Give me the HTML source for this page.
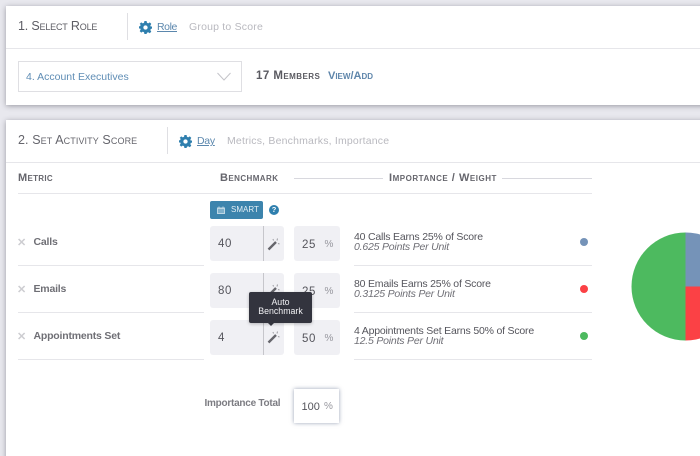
<!DOCTYPE html>
<html><head><meta charset="utf-8">
<style>
html,body{margin:0;padding:0}
body{width:700px;height:456px;overflow:hidden;background:#e8e8ee;position:relative;font-family:"Liberation Sans",sans-serif;color:#5f5f66}
#w{position:absolute;left:0;top:0;width:700px;height:456px;overflow:hidden;filter:blur(.35px)}
.a{position:absolute;white-space:nowrap}
.card{position:absolute;background:#fff;box-shadow:0 1px 5px rgba(60,60,70,.45)}
.line{position:absolute;background:#e6e6ea;height:1px}
.v{position:absolute;background:#dfdfe3;width:1px}
.sc{font-variant:small-caps}
.box{position:absolute;background:#f0f0f4;border-radius:3px}
.num{position:absolute;font-size:11.5px;color:#55555c;letter-spacing:.6px;line-height:14px}
.pct{position:absolute;font-size:10px;color:#96969d;line-height:14px}
.x{position:absolute;font-size:11px;font-weight:bold;color:#cdcdd1;line-height:14px}
.m{position:absolute;font-size:10.5px;font-weight:bold;color:#606067;letter-spacing:-.2px;line-height:14px;white-space:nowrap;opacity:.9}
.e1{position:absolute;font-size:10.5px;color:#55555c;letter-spacing:-.2px;line-height:11px;white-space:nowrap}
.e2{position:absolute;font-size:10.5px;font-style:italic;color:#6f6f76;letter-spacing:-.2px;line-height:11px;white-space:nowrap}
.dot{position:absolute;width:8px;height:8px;border-radius:50%}
</style></head><body><div id="w">

<div class="card" style="left:6px;top:6px;width:700px;height:99px"></div>
<div class="card" style="left:6px;top:120px;width:700px;height:345px"></div>

<!-- Card 1 -->
<div class="a sc" style="left:18px;top:18px;font-size:12.5px;line-height:16px;letter-spacing:-.18px;color:#5d5d64">1. Select Role</div>
<div class="v" style="left:127px;top:13px;height:27px"></div>
<svg class="a" style="left:139px;top:21px" width="13" height="13" viewBox="0 0 24 24"><path fill="#2f7fae" fill-rule="evenodd" d="M10 0h4l.7 3.3 2.3 1 2.9-1.800 2.800 2.800L20.900 8.200l1 2.300L24 10v4l-2.100.5-1 2.300 1.800 2.900-2.800 2.800-2.900-1.800-2.300 1L14 24h-4l-.7-3.300-2.300-1-2.900 1.800-2.800-2.800 1.800-2.900-1-2.300L0 14v-4l2.100-.5 1-2.300L1.300 5.300l2.800-2.800L7 4.300l2.300-1zM12 8a4 4 0 1 0 0 8 4 4 0 0 0 0-8z"/></svg>
<div class="a" style="left:157px;top:20px;font-size:10.5px;line-height:14px;color:#5b87ad;text-decoration:underline;letter-spacing:-.4px">Role</div>
<div class="a" style="left:189px;top:20px;font-size:10.5px;line-height:14px;color:#b9b9bf;letter-spacing:.2px">Group to Score</div>
<div class="line" style="left:6px;top:48px;width:694px"></div>

<div class="a" style="left:18px;top:61px;width:222px;height:29px;border:1px solid #dfdfe3"></div>
<div class="a" style="left:26px;top:70px;font-size:10.5px;line-height:14px;color:#5f8db5;letter-spacing:0">4. Account Executives</div>
<svg class="a" style="left:216px;top:71px" width="16" height="11" viewBox="0 0 16 11"><path d="M1.5 2 8 9l6.500-7" fill="none" stroke="#c4c4c9" stroke-width="1"/></svg>
<div class="a sc" style="left:256px;top:69px;font-size:11.5px;line-height:15px;font-weight:bold;color:#5a5a61;letter-spacing:.45px">17 Members</div>
<div class="a sc" style="left:328px;top:69px;font-size:11px;line-height:15px;font-weight:bold;color:#5f86ab;letter-spacing:0">View/Add</div>

<!-- Card 2 -->
<div class="a sc" style="left:18px;top:132px;font-size:12.5px;line-height:16px;letter-spacing:.1px;color:#66666d">2. Set Activity Score</div>
<div class="v" style="left:167px;top:127px;height:27px"></div>
<svg class="a" style="left:179px;top:135px" width="13" height="13" viewBox="0 0 24 24"><path fill="#2f7fae" fill-rule="evenodd" d="M10 0h4l.7 3.3 2.3 1 2.9-1.800 2.800 2.800L20.900 8.200l1 2.300L24 10v4l-2.100.5-1 2.300 1.800 2.900-2.800 2.800-2.900-1.800-2.300 1L14 24h-4l-.7-3.300-2.300-1-2.900 1.800-2.800-2.800 1.800-2.900-1-2.300L0 14v-4l2.100-.5 1-2.300L1.300 5.300l2.800-2.800L7 4.300l2.300-1zM12 8a4 4 0 1 0 0 8 4 4 0 0 0 0-8z"/></svg>
<div class="a" style="left:197px;top:134px;font-size:10.5px;line-height:14px;color:#5b87ad;text-decoration:underline;letter-spacing:-.3px">Day</div>
<div class="a" style="left:227px;top:134px;font-size:10.5px;line-height:14px;color:#b9b9bf;letter-spacing:.19px">Metrics, Benchmarks, Importance</div>
<div class="line" style="left:6px;top:162px;width:694px"></div>

<div class="a sc" style="left:18px;top:171px;font-size:11px;line-height:15px;font-weight:bold;color:#66666d;letter-spacing:.3px">Metric</div>
<div class="a sc" style="left:220px;top:171px;font-size:11px;line-height:15px;font-weight:bold;color:#66666d;letter-spacing:.42px">Benchmark</div>
<div class="line" style="left:294px;top:178px;width:89px;background:#d8d8de"></div>
<div class="a sc" style="left:389px;top:171px;font-size:11px;line-height:15px;font-weight:bold;color:#66666d;letter-spacing:.52px">Importance / Weight</div>
<div class="line" style="left:502px;top:178px;width:90px;background:#d8d8de"></div>
<div class="line" style="left:18px;top:193px;width:574px"></div>

<!-- Smart -->
<div class="a" style="left:210px;top:201px;width:53px;height:18px;background:#3c84ad;border-radius:2px"></div>
<svg class="a" style="left:217px;top:206px" width="8" height="8" viewBox="0 0 8 8"><path d="M0 1.500h8V8H0z" fill="#bcd6e4"/><path d="M1 3h6v4H1z" fill="#7fb0cb"/><path d="M2 .5v2M6 .5v2" stroke="#bcd6e4"/></svg>
<div class="a" style="left:231px;top:203px;font-size:8px;line-height:14px;color:#e3eff5;letter-spacing:0">SMART</div>
<div class="a" style="left:269px;top:205px;width:10px;height:10px;border-radius:50%;background:#2f7fae;color:#fff;font-size:7.5px;line-height:10px;text-align:center;font-weight:bold">?</div>

<!-- Row 1 -->
<div class="x" style="left:17px;top:236px">✕</div>
<div class="m" style="left:33.5px;top:235px">Calls</div>
<div class="box" style="left:210px;top:226px;width:74px;height:35px"></div>
<div class="v" style="left:263px;top:226px;height:35px;background:#c6c6cb"></div>
<div class="num" style="left:218px;top:237px">40</div>
<svg class="a" style="left:267px;top:238px" width="13" height="13" viewBox="0 0 13 13"><path d="M1.500 11.500 9 4" stroke="#66666c" stroke-width="2.400"/><path d="M6 1l.5 1.500M10.500 .5 10 2.500M12.500 6 11 5.500" stroke="#9a9aa0"/></svg>
<div class="box" style="left:294px;top:226px;width:46px;height:35px"></div>
<div class="num" style="left:302px;top:238px">25</div>
<div class="pct" style="left:324.5px;top:238px">%</div>
<div class="e1" style="left:354px;top:232px">40 Calls Earns 25% of Score</div>
<div class="e2" style="left:354px;top:242px">0.625 Points Per Unit</div>
<div class="dot" style="left:580px;top:238px;background:#7593b8"></div>
<div class="line" style="left:18px;top:265px;width:186px"></div>
<div class="line" style="left:354px;top:265px;width:238px"></div>

<!-- Row 2 -->
<div class="x" style="left:17px;top:283px">✕</div>
<div class="m" style="left:33.5px;top:282px">Emails</div>
<div class="box" style="left:210px;top:273px;width:74px;height:35px"></div>
<div class="v" style="left:263px;top:273px;height:35px;background:#c6c6cb"></div>
<div class="num" style="left:218px;top:284px">80</div>
<svg class="a" style="left:267px;top:284px" width="13" height="13" viewBox="0 0 13 13"><path d="M1.500 11.500 9 4" stroke="#66666c" stroke-width="2.400"/><path d="M6 1l.5 1.500M10.500 .5 10 2.500M12.500 6 11 5.500" stroke="#9a9aa0"/></svg>
<div class="box" style="left:294px;top:273px;width:46px;height:35px"></div>
<div class="num" style="left:302px;top:285px">25</div>
<div class="pct" style="left:324.5px;top:285px">%</div>
<div class="e1" style="left:354px;top:279px">80 Emails Earns 25% of Score</div>
<div class="e2" style="left:354px;top:289px">0.3125 Points Per Unit</div>
<div class="dot" style="left:580px;top:285px;background:#fb4145"></div>
<div class="line" style="left:18px;top:312px;width:186px"></div>
<div class="line" style="left:354px;top:312px;width:238px"></div>

<!-- Row 3 -->
<div class="x" style="left:17px;top:330px">✕</div>
<div class="m" style="left:33.5px;top:329px">Appointments Set</div>
<div class="box" style="left:210px;top:320px;width:74px;height:35px"></div>
<div class="v" style="left:263px;top:320px;height:35px;background:#c6c6cb"></div>
<div class="num" style="left:218px;top:331px">4</div>
<svg class="a" style="left:267px;top:331px" width="13" height="13" viewBox="0 0 13 13"><path d="M1.500 11.500 9 4" stroke="#66666c" stroke-width="2.400"/><path d="M6 1l.5 1.500M10.500 .5 10 2.500M12.500 6 11 5.500" stroke="#9a9aa0"/></svg>
<div class="box" style="left:294px;top:320px;width:46px;height:35px"></div>
<div class="num" style="left:302px;top:332px">50</div>
<div class="pct" style="left:324.5px;top:332px">%</div>
<div class="e1" style="left:354px;top:326px">4 Appointments Set Earns 50% of Score</div>
<div class="e2" style="left:354px;top:336px">12.5 Points Per Unit</div>
<div class="dot" style="left:580px;top:332px;background:#4dba5f"></div>
<div class="line" style="left:18px;top:359px;width:186px"></div>
<div class="line" style="left:354px;top:359px;width:238px"></div>

<!-- Tooltip -->
<div class="a" style="left:249px;top:292px;width:63px;height:31px;background:#33343e;border-radius:2px;box-shadow:0 1px 3px rgba(0,0,0,.25);color:#f0f0f3;font-size:8.8px;line-height:9px;text-align:center;padding-top:6px;box-sizing:border-box;white-space:normal">Auto<br>Benchmark</div>
<div class="a" style="left:267.5px;top:323px;width:0;height:0;border-left:3.5px solid transparent;border-right:3.5px solid transparent;border-top:3.5px solid #33343e"></div>

<!-- Total -->
<div class="a" style="left:204.5px;top:397px;font-size:10px;line-height:14px;font-weight:bold;color:#66666d;letter-spacing:-.25px;opacity:.85">Importance Total</div>
<div class="a" style="left:294px;top:389px;width:45px;height:34px;background:#fff;box-shadow:0 0 4px rgba(70,85,120,.55)"></div>
<div class="num" style="left:301.5px;top:400px;letter-spacing:0;font-size:11px">100</div>
<div class="pct" style="left:324px;top:400px">%</div>

<!-- Pie -->
<svg class="a" style="left:620px;top:222px" width="80" height="130" viewBox="620 222 80 130">
<path d="M685.5 286.5V232.5A54 54 0 0 1 739.5 286.5Z" fill="#7593b8"/>
<path d="M685.5 286.5H739.5A54 54 0 0 1 685.5 340.5Z" fill="#fb4145"/>
<path d="M685.5 340.5A54 54 0 0 1 685.5 232.5Z" fill="#4dba5f"/>
</svg>

</div></body></html>
